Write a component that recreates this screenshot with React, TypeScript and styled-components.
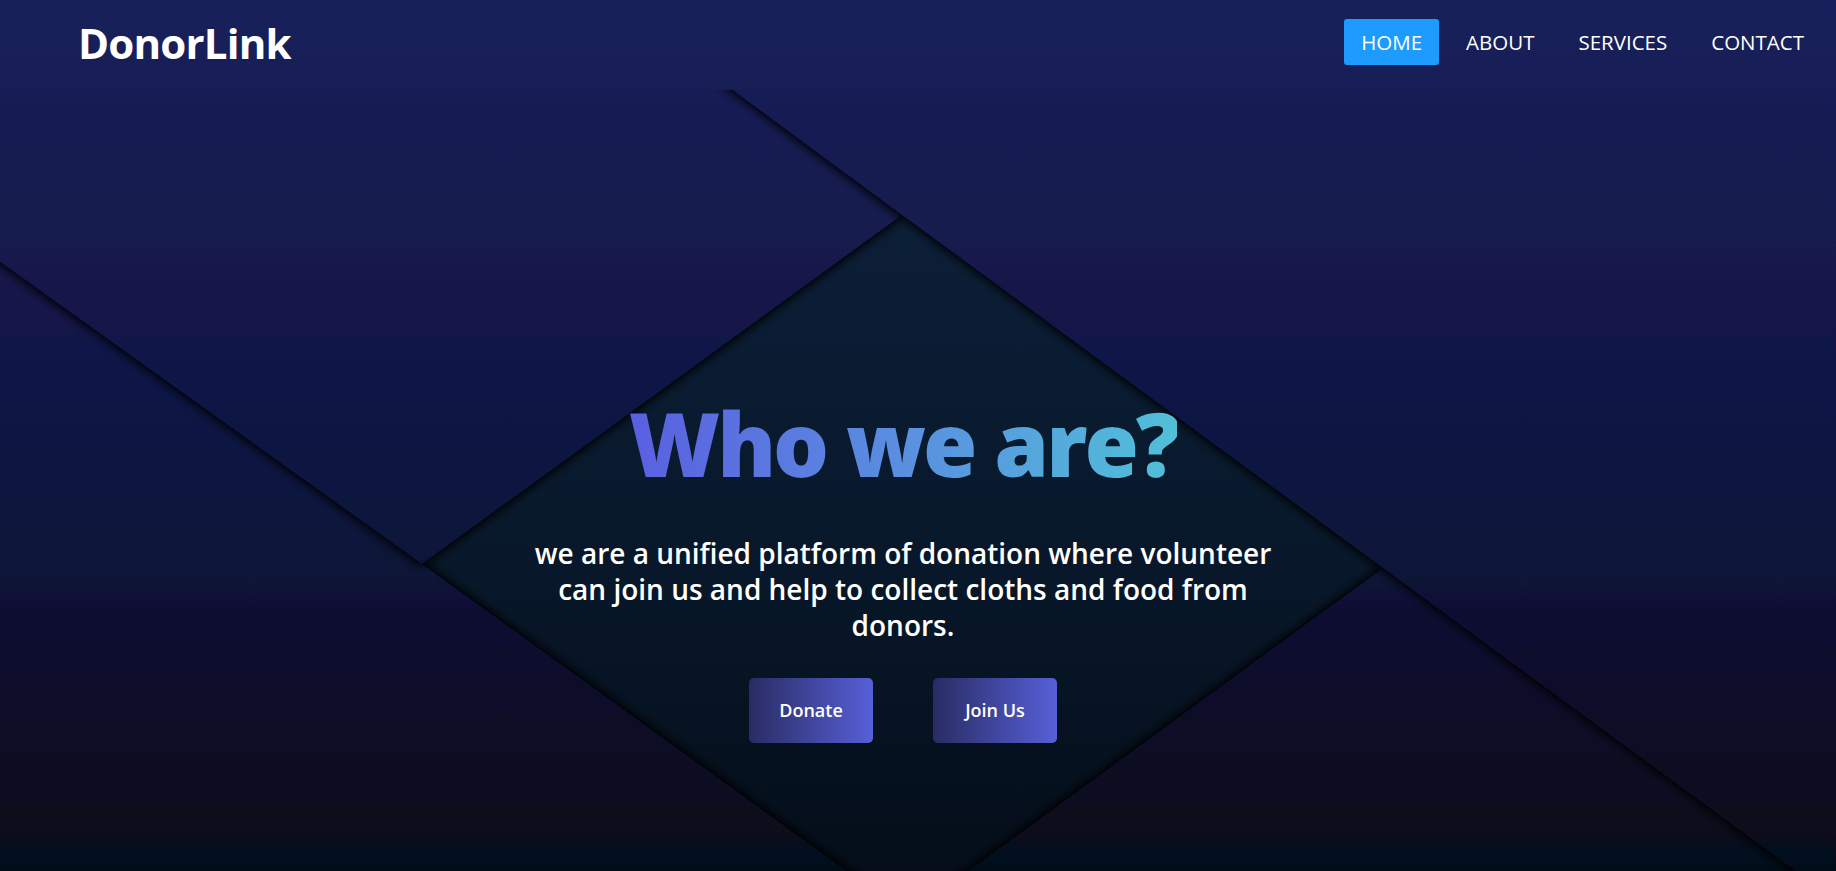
import React from 'react';
import styled, { createGlobalStyle } from 'styled-components';

const GlobalStyle = createGlobalStyle`
  * {
    box-sizing: border-box;
  }
  html, body {
    margin: 0;
    padding: 0;
  }
  body {
    background: #070a1a;
    font-family: "Open Sans", "Noto Sans", sans-serif;
    overflow: hidden;
  }
`;

const Page = styled.div`
  display: flex;
  flex-direction: column;
  height: 100vh;
`;

const Header = styled.header`
  height: 90px;
  display: flex;
  align-items: center;
  justify-content: space-between;
  padding: 0 15px 6px 78px;
  background: linear-gradient(180deg, #18205b 0%, #171e56 100%);
`;

const Logo = styled.h1`
  margin: 0;
  font-size: 42px;
  font-weight: 700;
  color: #fff;
  letter-spacing: -0.8px;
`;

const Nav = styled.nav`
  display: flex;
  gap: 10px;
`;

const NavLink = styled.a<{ $active?: boolean }>`
  padding: 9.5px 17px;
  font-size: 20.5px;
  line-height: 27px;
  color: #fff;
  text-decoration: none;
  border-radius: 3px;
  background: ${(p) => (p.$active ? '#1e9bff' : 'transparent')};
`;

const Hero = styled.section`
  flex: 1;
  position: relative;
  overflow: hidden;
  display: flex;
  flex-direction: column;
  align-items: center;
  padding: 301px 30px 0 0;
`;

const Backdrop = styled.svg`
  position: absolute;
  inset: 0;
  width: 100%;
  height: 100%;
  z-index: 0;
`;

const Content = styled.div`
  position: relative;
  z-index: 1;
  display: flex;
  flex-direction: column;
  align-items: center;
`;

const Title = styled.h2`
  margin: 0;
  font-size: 88px;
  line-height: 1.2;
  font-weight: 800;
  letter-spacing: -3px;
  background: linear-gradient(90deg, #5a5fe0 0%, #5a8fe0 50%, #50c0d8 100%);
  -webkit-background-clip: text;
  background-clip: text;
  color: transparent;
`;

const Lead = styled.p`
  width: 760px;
  margin: 38px 0 0;
  font-size: 28px;
  line-height: 36px;
  font-weight: 600;
  text-align: center;
  color: #fff;
`;

const Actions = styled.div`
  display: flex;
  gap: 60px;
  margin-top: 35px;
`;

const ActionButton = styled.button`
  width: 124px;
  height: 65px;
  border: none;
  border-radius: 5px;
  background: linear-gradient(90deg, #292c63 0%, #575fd8 100%);
  color: #fff;
  font-family: inherit;
  font-size: 18px;
  font-weight: 600;
  cursor: pointer;
`;

const navItems = ['HOME', 'ABOUT', 'SERVICES', 'CONTACT'];

const Planes: React.FC = () => (
  <Backdrop viewBox="0 0 1836 781" preserveAspectRatio="none">
    <defs>
      <linearGradient id="navy" gradientUnits="userSpaceOnUse" x1="0" y1="0" x2="0" y2="781">
        <stop offset="0" stopColor="#161d54" />
        <stop offset="0.5" stopColor="#0f1540" />
        <stop offset="1" stopColor="#060919" />
      </linearGradient>
      <linearGradient id="teal" gradientUnits="userSpaceOnUse" x1="0" y1="125" x2="0" y2="825">
        <stop offset="0" stopColor="#0c1f38" />
        <stop offset="0.5" stopColor="#08182a" />
        <stop offset="1" stopColor="#040c17" />
      </linearGradient>
      <filter id="lift" x="-20%" y="-20%" width="140%" height="140%">
        <feDropShadow dx="0" dy="0" stdDeviation="6" floodColor="#000" floodOpacity="0.9" />
        <feDropShadow dx="0" dy="0" stdDeviation="1.2" floodColor="#000" floodOpacity="1" />
      </filter>
    </defs>
    <polygon points="902,125 1383,478 908,825 422,474" fill="url(#teal)" />
    <polygon
      points="-50,136 422,474 908,825 1000,900 -50,900"
      fill="url(#navy)"
      filter="url(#lift)"
    />
    <polygon
      points="1383,478 1957,900 800,900 908,825"
      fill="url(#navy)"
      filter="url(#lift)"
    />
    <polygon
      points="-50,-50 665,-50 902,125 422,474 -50,136"
      fill="url(#navy)"
      filter="url(#lift)"
    />
    <polygon
      points="665,-50 1960,-50 1960,900 1957,900 1383,478 902,125"
      fill="url(#navy)"
      filter="url(#lift)"
    />
  </Backdrop>
);

const App: React.FC = () => {
  return (
    <Page>
      <GlobalStyle />
      <Header>
        <Logo>DonorLink</Logo>
        <Nav>
          {navItems.map((item, i) => (
            <NavLink key={item} href="#" $active={i === 0}>
              {item}
            </NavLink>
          ))}
        </Nav>
      </Header>
      <Hero>
        <Planes />
        <Content>
          <Title>Who we are?</Title>
          <Lead>
            we are a unified platform of donation where volunteer can join us and help to collect
            cloths and food from donors.
          </Lead>
          <Actions>
            <ActionButton>Donate</ActionButton>
            <ActionButton>Join Us</ActionButton>
          </Actions>
        </Content>
      </Hero>
    </Page>
  );
};

export default App;
